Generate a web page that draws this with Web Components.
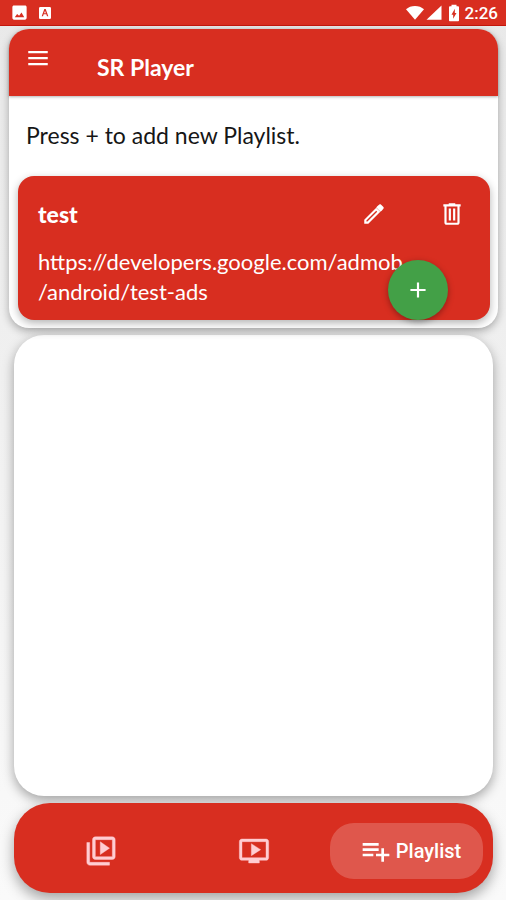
<!DOCTYPE html>
<html lang="en">
<head>
<meta charset="utf-8">
<meta name="viewport" content="width=device-width, initial-scale=1">
<title>SR Player</title>
<style>
    :root {
        --primary: #d82e20;
        --accent: #43a047;
        --shadow: 0 3px 8px rgba(0,0,0,0.3);
    }

    body {
        margin: 0;
        background: linear-gradient(#e9e9e9, #fafafa);
        font-family: Lato, "Liberation Sans", sans-serif;
    }
</style>
</head>
<body>
<sr-app>
    <sr-status-bar slot="status" time="2:26"></sr-status-bar>
    <sr-panel title-text="SR Player">
        <p>Press + to add new Playlist.</p>
        <sr-playlist-item name="test">
            <a href="https://developers.google.com/admob/android/test-ads">https://developers.google.com/admob<wbr>/android/test-ads</a>
        </sr-playlist-item>
        <sr-fab slot="fab"></sr-fab>
    </sr-panel>
    <sr-ad-space></sr-ad-space>
    <sr-nav>
        <sr-nav-item icon="library" label="Library"></sr-nav-item>
        <sr-nav-item icon="video" label="Video"></sr-nav-item>
        <sr-nav-item icon="playlist" label="Playlist" active></sr-nav-item>
    </sr-nav>
</sr-app>

<script>
const icons = {
    menu: '<path d="M3 5.500h18v2.200H3zM3 11h18v2.200H3zM3 16.500h18v2.200H3z"/>',
    edit: '<path d="M14.06 9.02l.92.92L5.92 19H5v-.92l9.06-9.06M17.66 3c-.25 0-.51.1-.7.29l-1.83 1.83 3.75 3.75 1.83-1.83c.39-.39.39-1.02 0-1.41l-2.34-2.34c-.2-.2-.45-.29-.71-.29zm-3.6 3.19L3 17.25V21h3.75L17.81 9.94l-3.75-3.75z"/><path d="M14 6l4 4 2-2-4-4z"/>',
    trash: '<path d="M15 3V2H9v1H4v2h1v15c0 1.100.9 2 2 2h10c1.100 0 2-.9 2-2V5h1V3h-5zm2 17H7V5h10v15zM9 7h2v11H9zM13 7h2v11h-2z"/>',
    plus: '<path d="M19 13h-6v6h-2v-6H5v-2h6V5h2v6h6v2z"/>',
    library: '<path d="M4 6H2v14c0 1.100.9 2 2 2h14v-2H4V6zm16-4H8c-1.100 0-2 .9-2 2v12c0 1.100.9 2 2 2h12c1.100 0 2-.9 2-2V4c0-1.100-.9-2-2-2zm0 14H8V4h12v12zM11.500 5.500v9l6.500-4.500z" stroke="currentColor" stroke-width=".3"/>',
    video: '<path d="M21 3H3c-1.110 0-2 .89-2 2v12c0 1.100.89 2 2 2h5v2h8v-2h5c1.100 0 1.990-.9 1.990-2L23 5c0-1.110-.9-2-2-2zm0 14H3V5h18v12zm-4-6l-7 4.500v-9z" stroke="currentColor" stroke-width=".3"/>',
    playlist: '<path d="M14 10H2v2h12v-2zm0-4H2v2h12V6zm4 8v-4h-2v4h-4v2h4v4h2v-4h4v-2h-4zM2 14h8v2H2z"/>',
    picture: '<path d="M21 19V5c0-1.100-.9-2-2-2H5c-1.100 0-2 .9-2 2v14c0 1.100.9 2 2 2h14c1.100 0 2-.9 2-2zM6 18l3-4 2.500 2 3-4L18 18z"/>',
    badge: '<path fill-rule="evenodd" d="M5 3h14q2 0 2 2v14q0 2-2 2H5q-2 0-2-2V5q0-2 2-2zM11 6L7 17h2l1-3h4l1 3h2L13 6zM12 8.500l1.300 4h-2.600z"/>',
    wifi: '<path d="M0 7C6 1 18 1 24 7L12 21z"/>',
    signal: '<path d="M2 21h20V2z"/>',
    battery: '<path fill-rule="evenodd" d="M16.670 4H15V2H9v2H7.330C6.600 4 6 4.600 6 5.330v15.330C6 21.400 6.600 22 7.330 22h9.330c.74 0 1.340-.6 1.340-1.330V5.330C18 4.600 17.400 4 16.670 4zM11 19v-5H9L13 7v5h2z"/>'
};

function icon(name, size) {
    return `<svg viewBox="0 0 24 24" width="${size}" height="${size}" fill="currentColor" aria-hidden="true">${icons[name]}</svg>`;
}

class App extends HTMLElement {
    constructor() {
        super();
        this.attachShadow({ mode: 'open' });
        this.shadowRoot.innerHTML = `
            <style>
                :host {
                    display: flex;
                    flex-direction: column;
                    min-height: 100vh;
                }

                main {
                    flex: 1;
                    display: flex;
                    flex-direction: column;
                    gap: 7px;
                    padding: 3px 8px 7px 9px;
                }
            </style>
            <slot name="status"></slot>
            <main><slot></slot></main>
        `;
    }
}

class StatusBar extends HTMLElement {
    constructor() {
        super();
        this.attachShadow({ mode: 'open' });
        this.shadowRoot.innerHTML = `
            <style>
                :host {
                    display: flex;
                    align-items: center;
                    justify-content: space-between;
                    box-sizing: border-box;
                    height: 26px;
                    padding: 0 8px 0 10px;
                    background: var(--primary);
                    border-bottom: 1px solid #c4160c;
                    color: white;
                    font: 500 17px/24px Roboto, sans-serif;
                }

                div {
                    display: flex;
                    align-items: center;
                }

                svg { display: block; }
                .left { gap: 8px; }
                .right { gap: 1px; }
            </style>
            <div class="left">${icon('picture', 19)}${icon('badge', 16)}</div>
            <div class="right">${icon('wifi', 18)}${icon('signal', 18)}${icon('battery', 20)}<span></span></div>
        `;
        this.shadowRoot.querySelector('span').textContent = this.getAttribute('time');
    }
}

class Panel extends HTMLElement {
    constructor() {
        super();
        this.attachShadow({ mode: 'open' });
        this.shadowRoot.innerHTML = `
            <style>
                :host {
                    display: block;
                    position: relative;
                    background: white;
                    border-radius: 20px;
                    box-shadow: var(--shadow);
                }

                header {
                    display: flex;
                    align-items: flex-start;
                    gap: 46px;
                    box-sizing: border-box;
                    height: 67px;
                    padding: 16px;
                    background: var(--primary);
                    color: white;
                    border-radius: 20px 20px 0 0;
                    box-shadow: 0 1px 3px rgba(0,0,0,0.3);
                }

                button {
                    padding: 0;
                    border: none;
                    background: none;
                    color: inherit;
                    cursor: pointer;
                }

                svg { display: block; }

                h1 {
                    margin: 8px 0 0;
                    font-size: 23px;
                    line-height: 28px;
                    font-weight: bold;
                }

                section { padding: 24px 8px 8px 9px; }

                ::slotted(p) {
                    margin: 0 8px 26px;
                    font-size: 23px;
                    line-height: 30px;
                    color: #161616;
                }

                /* the add button floats over the list */
                ::slotted(sr-fab) {
                    position: absolute;
                    right: 50px;
                    bottom: 8px;
                }
            </style>
            <header>
                <button aria-label="Menu">${icon('menu', 26)}</button>
                <h1></h1>
            </header>
            <section><slot></slot></section>
            <slot name="fab"></slot>
        `;
        this.shadowRoot.querySelector('h1').textContent = this.getAttribute('title-text');
    }
}

class PlaylistItem extends HTMLElement {
    constructor() {
        super();
        this.attachShadow({ mode: 'open' });
        this.shadowRoot.innerHTML = `
            <style>
                :host {
                    display: block;
                    padding: 20px 25px 13px 20px;
                    background: var(--primary);
                    color: white;
                    border-radius: 16px;
                    box-shadow: var(--shadow);
                }

                header {
                    display: flex;
                    align-items: center;
                    margin-bottom: 15px;
                }

                h2 {
                    flex: 1;
                    margin: 0;
                    font-size: 23px;
                    line-height: 36px;
                    font-weight: 900;
                }

                .actions {
                    display: flex;
                    gap: 52px;
                }

                button {
                    padding: 0;
                    border: none;
                    background: none;
                    color: inherit;
                    cursor: pointer;
                }

                svg { display: block; }

                ::slotted(a) {
                    display: block;
                    margin-right: 48px;
                    color: inherit;
                    text-decoration: none;
                    font-size: 22px;
                    line-height: 30px;
                }
            </style>
            <header>
                <h2></h2>
                <div class="actions">
                    <button aria-label="Edit">${icon('edit', 26)}</button>
                    <button aria-label="Delete">${icon('trash', 26)}</button>
                </div>
            </header>
            <slot></slot>
        `;
        this.shadowRoot.querySelector('h2').textContent = this.getAttribute('name');
    }
}

class Fab extends HTMLElement {
    constructor() {
        super();
        this.attachShadow({ mode: 'open' });
        this.shadowRoot.innerHTML = `
            <style>
                :host { display: block; }

                button {
                    display: grid;
                    place-items: center;
                    width: 60px;
                    height: 60px;
                    padding: 0;
                    border: none;
                    border-radius: 50%;
                    background: var(--accent);
                    color: white;
                    box-shadow: 0 2px 6px rgba(0,0,0,0.35);
                    cursor: pointer;
                }
            </style>
            <button aria-label="Add playlist">${icon('plus', 26)}</button>
        `;
    }
}

class AdSpace extends HTMLElement {
    constructor() {
        super();
        this.attachShadow({ mode: 'open' });
        this.shadowRoot.innerHTML = `
            <style>
                :host {
                    display: block;
                    flex: 1;
                    min-height: 200px;
                    margin: 0 5px;
                    background: white;
                    border-radius: 30px;
                    box-shadow: 0 4px 12px rgba(0,0,0,0.35);
                }
            </style>
            <slot></slot>
        `;
    }
}

class Nav extends HTMLElement {
    constructor() {
        super();
        this.attachShadow({ mode: 'open' });
        this.shadowRoot.innerHTML = `
            <style>
                :host {
                    display: block;
                    margin: 0 5px;
                    background: var(--primary);
                    border-radius: 36px;
                    box-shadow: 0 6px 14px rgba(0,0,0,0.35);
                }

                nav {
                    display: grid;
                    grid-template-columns: repeat(3, 1fr);
                    padding: 20px 10px 14px;
                }
            </style>
            <nav><slot></slot></nav>
        `;
    }
}

class NavItem extends HTMLElement {
    constructor() {
        super();
        this.attachShadow({ mode: 'open' });
        const name = this.getAttribute('icon');
        const label = this.getAttribute('label');
        const active = this.hasAttribute('active');
        this.shadowRoot.innerHTML = `
            <style>
                :host { display: block; }

                button {
                    display: flex;
                    align-items: center;
                    justify-content: center;
                    gap: 4px;
                    width: 100%;
                    height: 56px;
                    padding: 0;
                    border: none;
                    border-radius: 24px;
                    background: none;
                    color: #ffcdd2;
                    font: 500 20px/24px Roboto, sans-serif;
                    cursor: pointer;
                }

                :host([active]) button {
                    padding-left: 8px;
                    background: rgba(255,255,255,0.2);
                    color: white;
                }
            </style>
            <button aria-label="${label}">${icon(name, active || name === 'video' ? 32 : 34)}${active ? `<span>${label}</span>` : ''}</button>
        `;
    }
}

customElements.define('sr-app', App);
customElements.define('sr-status-bar', StatusBar);
customElements.define('sr-panel', Panel);
customElements.define('sr-playlist-item', PlaylistItem);
customElements.define('sr-fab', Fab);
customElements.define('sr-ad-space', AdSpace);
customElements.define('sr-nav', Nav);
customElements.define('sr-nav-item', NavItem);
</script>
</body>
</html>
